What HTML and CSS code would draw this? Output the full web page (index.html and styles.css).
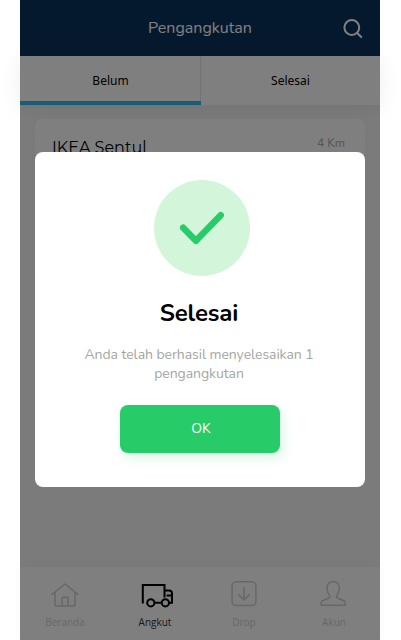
FILE: index.html
```html
<!DOCTYPE html>
<html lang="id">
<head>
<meta charset="utf-8">
<title>Pengangkutan</title>
<link rel="stylesheet" href="styles.css">
</head>
<body>
<div class="phone">
  <header class="header">
    <h1 class="header-title">Pengangkutan</h1>
    <svg class="search" width="20" height="20" viewBox="0 0 20 20"><circle cx="8.8" cy="8.5" r="7.4"/><path d="M14.2 14L18.2 18"/></svg>
  </header>
  <nav class="tabs">
    <div class="tab active"><span>Belum</span></div>
    <div class="tab"><span>Selesai</span></div>
  </nav>
  <main class="content">
    <article class="card">
      <h2 class="place">IKEA Sentul</h2>
      <span class="distance">4 Km</span>
    </article>
  </main>
  <nav class="bottom">
    <div class="item">
      <svg width="36" height="30" viewBox="0 0 36 30"><path d="M5 14.5L18 4L31 14.5M8 12.4V24.2Q8 26 9.8 26H26.2Q28 26 28 24.2V12.4M15 26V18.4Q15 17.2 16.2 17.2H19.8Q21 17.2 21 18.4V26"/></svg>
      <span>Beranda</span>
    </div>
    <div class="item current">
      <svg width="36" height="30" viewBox="-2 0 36 30"><path d="M3.8 23.5V4.9H25.5V17.5M25.5 10.5H30Q33 10.5 33 13.5V22.8H30M27.5 15.5H32.5M15.3 22.8H22.7"/><circle cx="11.8" cy="22.8" r="3.6"/><circle cx="26.4" cy="22.8" r="3.6"/></svg>
      <span>Angkut</span>
    </div>
    <div class="item drop">
      <svg width="36" height="30" viewBox="0 0 36 30"><rect x="6.1" y="1.8" width="23.8" height="23.8" rx="4"/><path d="M18 7.5V20M12.5 14.5L18 20L23.5 14.5"/></svg>
      <span>Drop</span>
    </div>
    <div class="item account">
      <svg width="36" height="30" viewBox="0 0 36 30"><path d="M5.2 25.3V22.5Q5.2 21.3 6.5 20.8L12.5 18.3Q14.7 17.2 13.6 15.5Q11 12.5 11 8.3Q11 1.8 17.2 1.8T23.4 8.3Q23.4 12.5 20.9 15.5Q19.8 17.2 22 18.3L28 20.8Q29.3 21.3 29.3 22.5V25.3Z"/></svg>
      <span>Akun</span>
    </div>
  </nav>
  <div class="overlay">
    <section class="modal">
      <div class="success"><svg width="96" height="96" viewBox="0 0 96 96"><path d="M29.2 47.7L41.9 60.8L66.7 35.2"/></svg></div>
      <h2 class="modal-title">Selesai</h2>
      <p class="message">Anda telah berhasil menyelesaikan 1<br>pengangkutan</p>
      <button class="ok">OK</button>
    </section>
  </div>
</div>
</body>
</html>
```
FILE: styles.css
```css
* { box-sizing: border-box; }
body { margin: 0; background: #fff; font-family: "Nunito", "Noto Sans", sans-serif; overflow: hidden; }
h1, h2, p { margin: 0; font-weight: 400; }
.phone { position: relative; width: 360px; height: 640px; margin-left: 20px; display: flex; flex-direction: column; background: #f7f7f7; }
.header { height: 56px; flex: none; display: grid; grid-template-columns: 1fr auto 1fr; align-items: center; background: #0b325d; color: #fff; }
.header-title { grid-column: 2; font-size: 16px; line-height: 24px; }
.search { justify-self: end; margin-right: 17px; margin-top: 1px; }
svg { display: block; fill: none; stroke: currentColor; stroke-width: 2; stroke-linecap: round; stroke-linejoin: round; }
.tabs { height: 49px; flex: none; display: flex; background: #fff; box-shadow: 0 4px 22px rgba(0, 0, 0, .07); }
.tab { flex: 1; display: flex; align-items: center; justify-content: center; font: 400 12px "Noto Sans", sans-serif; color: #000; }
.tab.active { flex: 0 0 181px; background: linear-gradient(#34b8ec, #34b8ec) bottom / 100% 4px no-repeat, linear-gradient(#e8e8e8, #e8e8e8) right / 1px 100% no-repeat; }
.content { flex: 1; padding: 14px 15px; }
.card { height: 160px; display: flex; justify-content: space-between; align-items: flex-start; padding: 16px 20px 0 17px; background: #fff; border-radius: 8px; box-shadow: 0 2px 12px rgba(0, 0, 0, .025); }
.place { font: 400 16px/26px "Montserrat", "Nunito", sans-serif; }
.distance { font-size: 12px; line-height: 17px; color: #aaa; }
.bottom { height: 73px; flex: none; display: grid; grid-template-columns: repeat(4, 90px); background: #fff; box-shadow: 0 -2px 10px rgba(0, 0, 0, .03); }
.item { display: flex; flex-direction: column; align-items: center; padding-top: 13px; color: #cfcfcf; font: 400 10px/14px "Open Sans", sans-serif; }
.item svg { stroke-width: 1.5; margin-bottom: 5px; }
.drop, .account { padding-right: 2px; }
.current { color: #000; }
.current span { color: #333; }
.current svg { stroke-width: 2; stroke-linecap: butt; stroke-linejoin: miter; }
.overlay { position: absolute; inset: 0; padding: 152px 15px 0; background: rgba(0, 0, 0, .5); }
.modal { height: 335px; padding-top: 28px; display: flex; flex-direction: column; align-items: center; background: #fff; border-radius: 8px; }
.success { width: 96px; height: 96px; margin-left: 4px; border-radius: 50%; background: #d3f5d9; color: #27cb67; }
.success svg { stroke-width: 6.5; }
.modal-title { margin-top: 21px; padding-right: 2px; font-weight: 700; font-size: 24px; line-height: 33px; letter-spacing: -.2px; }
.message { margin-top: 15px; padding-right: 2px; color: #a5a5a5; font-size: 14px; line-height: 19px; letter-spacing: -.07px; text-align: center; white-space: nowrap; }
.ok { width: 160px; height: 48px; margin-top: 22px; padding: 0 0 2px 2px; border: 0; border-radius: 8px; background: #27cb67; color: #fff; font: 400 14px "Nunito", "Noto Sans", sans-serif; box-shadow: 3px 5px 12px rgba(39, 203, 103, .18); }
```
